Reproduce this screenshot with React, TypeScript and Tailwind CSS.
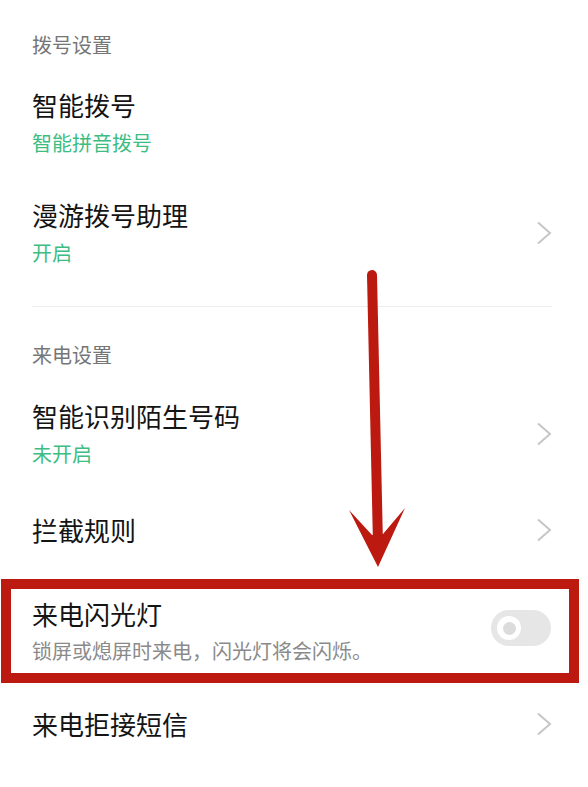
import React from 'react';

const green = 'text-[#3dbd82]';

function Chevron() {
    return (
        <svg width="16" height="24" viewBox="0 0 16 24" className="shrink-0">
            <polyline points="2,1.5 14,12 2,22.5" fill="none" stroke="#c6c6c6" strokeWidth="2" />
        </svg>
    );
}

function Header({ text }: { text: string }) {
    return <div className="text-[20px] leading-[28px] text-[#767676]">{text}</div>;
}

function Row({ title, sub, chevron, className = '' }: { title: string; sub?: string; chevron?: boolean; className?: string }) {
    return (
        <div className={`flex items-center justify-between ${className}`}>
            <div className="flex flex-col">
                <div className="text-[26px] leading-[32px] text-[#141414]">{title}</div>
                {sub && <div className={`mt-[9px] text-[20px] leading-[26px] ${green}`}>{sub}</div>}
            </div>
            {chevron && <Chevron />}
        </div>
    );
}

function Toggle() {
    return (
        <div className="w-[60px] h-[36px] mb-[6px] rounded-full bg-[#e6e6e6] flex items-center pl-[6px] shrink-0">
            <div className="w-[24px] h-[24px] rounded-full bg-white flex items-center justify-center">
                <div className="w-[13px] h-[13px] rounded-full bg-[#dcdcdc]" />
            </div>
        </div>
    );
}

export default function App() {
    return (
        <div className="relative w-[588px] h-[787px] bg-white overflow-hidden font-['Noto_Sans_CJK_SC',sans-serif]">
            <div className="pl-[32px] pr-[36px]">
                <div className="pt-[31px]">
                    <Header text="拨号设置" />
                </div>
                <Row className="mt-[30px]" title="智能拨号" sub="智能拼音拨号" />
                <Row className="mt-[43px]" title="漫游拨号助理" sub="开启" chevron />
                <div className="mt-[40px] h-px bg-[#ececec]" />
                <div className="mt-[34px]">
                    <Header text="来电设置" />
                </div>
                <Row className="mt-[31px]" title="智能识别陌生号码" sub="未开启" chevron />
                <Row className="mt-[47px]" title="拦截规则" chevron />
            </div>

            {/* highlighted row */}
            <div className="mt-[33px] ml-px w-[578px] h-[104px] border-[10px] border-[#bc1a10] flex items-center justify-between pl-[21px] pr-[18px]">
                <div className="flex flex-col">
                    <div className="text-[26px] leading-[32px] text-[#141414]">来电闪光灯</div>
                    <div className="mt-[8px] text-[20px] leading-[26px] text-[#8a8a8a]">锁屏或熄屏时来电，闪光灯将会闪烁。</div>
                </div>
                <Toggle />
            </div>

            <div className="pl-[32px] pr-[36px]">
                <Row className="mt-[25px]" title="来电拒接短信" chevron />
            </div>

            {/* annotation arrow */}
            <svg className="absolute left-0 top-0 pointer-events-none" width="588" height="787" viewBox="0 0 588 787">
                <line x1="372" y1="275" x2="378" y2="545" stroke="#bc1a10" strokeWidth="10" strokeLinecap="round" />
                <polygon points="349,510 378,567 405,508 383,534 372,535" fill="#bc1a10" />
            </svg>
        </div>
    );
}
